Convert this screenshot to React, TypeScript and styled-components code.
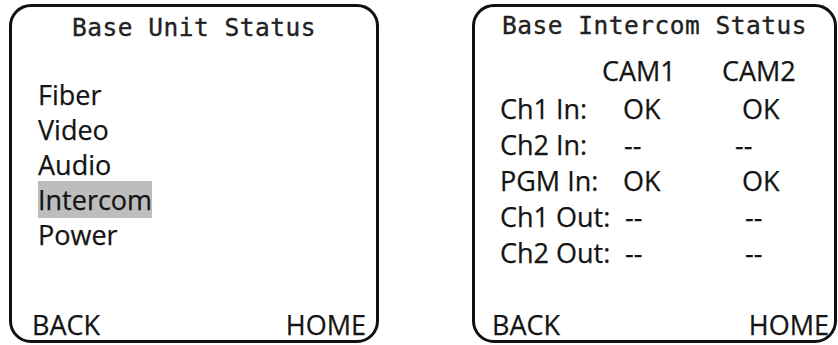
import React from "react"
import styled, { createGlobalStyle } from "styled-components"

const GlobalStyle = createGlobalStyle`
  html, body {
    margin: 0;
    padding: 0;
    background: #ffffff;
  }
  body {
    font-family: "Open Sans", "Noto Sans", sans-serif;
    color: #141414;
    -webkit-text-stroke: 0.25px #141414;
  }
`

const Page = styled.div`
  display: flex;
  align-items: flex-start;
  gap: 93px;
  padding: 4px 0 0 9px;
`

const Panel = styled.section<{ $width: number; $top: number }>`
  box-sizing: border-box;
  width: ${props => props.$width}px;
  height: 339px;
  border: 3px solid #111;
  border-radius: 22px;
  padding-top: ${props => props.$top}px;
  display: flex;
  flex-direction: column;
  overflow: hidden;
`

const Title = styled.h1`
  margin: 0;
  font-family: "DejaVu Sans Mono", "Liberation Mono", monospace;
  font-weight: 400;
  font-size: 24.5px;
  letter-spacing: 0.5px;
  line-height: 30px;
  text-align: center;
  color: #222;
  -webkit-text-stroke: 0.35px #222;
  white-space: nowrap;
`

const Menu = styled.ul`
  list-style: none;
  margin: 34px 0 0 0;
  padding: 0 0 0 26px;
  font-size: 27px;
  line-height: 35px;
`

const MenuItem = styled.li``

const Selected = styled.span`
  background: #bdbdbd;
`

const StatusGrid = styled.div`
  display: grid;
  grid-template-columns: 102px 120px 1fr;
  grid-auto-rows: 36px;
  grid-template-rows: 38px;
  margin-top: 12px;
  padding-left: 25px;
  font-size: 27px;
  line-height: 36px;
  white-space: nowrap;
`

const Cell = styled.div<{ $indent?: number }>`
  padding-left: ${props => props.$indent ?? 0}px;
`

const Footer = styled.footer<{ $left: number; $right: number }>`
  margin-top: auto;
  display: flex;
  justify-content: space-between;
  padding: 0 ${props => props.$right}px 0 ${props => props.$left}px;
  font-size: 27px;
  line-height: 30px;
`

const rows = [
  { label: "Ch1 In:", cam1: "OK", cam2: "OK", i1: 21, i2: 20 },
  { label: "Ch2 In:", cam1: "--", cam2: "--", i1: 22, i2: 13 },
  { label: "PGM In:", cam1: "OK", cam2: "OK", i1: 21, i2: 20 },
  { label: "Ch1 Out:", cam1: "--", cam2: "--", i1: 23, i2: 23 },
  { label: "Ch2 Out:", cam1: "--", cam2: "--", i1: 23, i2: 23 },
]

const App = () => {
  return (
    <Page>
      <GlobalStyle />
      <Panel $width={370} $top={6}>
        <Title>Base Unit Status</Title>
        <Menu>
          <MenuItem>Fiber</MenuItem>
          <MenuItem>Video</MenuItem>
          <MenuItem>Audio</MenuItem>
          <MenuItem>
            <Selected>Intercom</Selected>
          </MenuItem>
          <MenuItem>Power</MenuItem>
        </Menu>
        <Footer $left={20} $right={10}>
          <span>BACK</span>
          <span>HOME</span>
        </Footer>
      </Panel>
      <Panel $width={365} $top={4}>
        <Title>Base Intercom Status</Title>
        <StatusGrid>
          <Cell />
          <Cell>CAM1</Cell>
          <Cell>CAM2</Cell>
          {rows.map(row => (
            <React.Fragment key={row.label}>
              <Cell>{row.label}</Cell>
              <Cell $indent={row.i1}>{row.cam1}</Cell>
              <Cell $indent={row.i2}>{row.cam2}</Cell>
            </React.Fragment>
          ))}
        </StatusGrid>
        <Footer $left={17} $right={5}>
          <span>BACK</span>
          <span>HOME</span>
        </Footer>
      </Panel>
    </Page>
  )
}

export default App
